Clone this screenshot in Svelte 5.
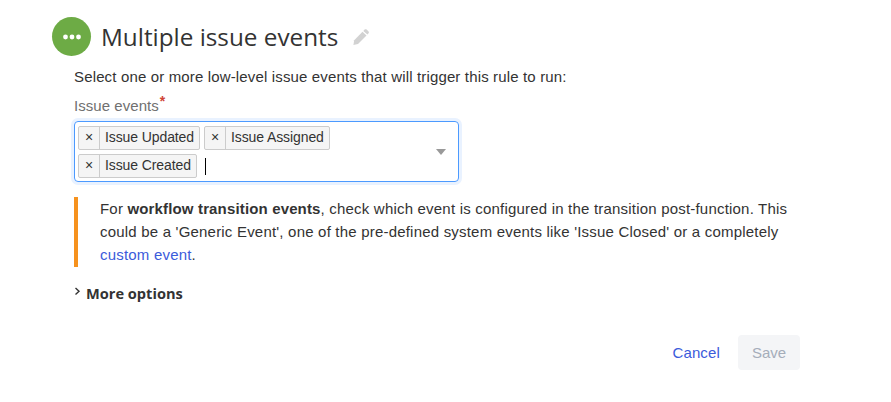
<script>
	const tags = ['Issue Updated', 'Issue Assigned', 'Issue Created'];
</script>

<div class="page">
	<header class="head">
		<span class="badge">
			<svg width="20" height="6" viewBox="0 0 20 6"><circle cx="3.5" cy="3" r="2.4" /><circle cx="10" cy="3" r="2.4" /><circle cx="16.5" cy="3" r="2.4" /></svg>
		</span>
		<h1>Multiple issue events</h1>
		<svg class="pencil" width="18" height="18" viewBox="0 0 18 18">
			<path d="M12.6 1.6 C13.2 1 14 1 14.6 1.5 L16.6 3.4 C17.1 4 17.1 4.7 16.6 5.3 L15.4 6.6 L11.3 2.9 Z" />
			<path d="M10.5 3.8 L14.5 7.5 L6 16 L1.4 17 L2.2 12.2 Z" />
		</svg>
	</header>

	<div class="form">
		<p class="intro">Select one or more low-level issue events that will trigger this rule to run:</p>
		<div class="label">Issue events<span class="req">*</span></div>

		<div class="select">
			<div class="tags">
				{#each tags as tag}
					<span class="tag"><span class="x">×</span><span class="name">{tag}</span></span>
				{/each}
				<span class="caret"></span>
			</div>
			<span class="arrow"></span>
		</div>

		<div class="note">
			For <b>workflow transition events</b>, check which event is configured in the transition post-function. This could be a 'Generic Event', one of the pre-defined system events like 'Issue Closed' or a completely <a href="#custom">custom event</a>.
		</div>

		<div class="more">
			<svg width="7" height="9" viewBox="0 0 7 9"><path d="M1.5 1 L5 4.2 L1.5 7.4" /></svg>
			<span>More options</span>
		</div>

		<div class="actions">
			<a class="cancel" href="#cancel">Cancel</a>
			<button class="save" disabled>Save</button>
		</div>
	</div>
</div>

<style>
	:global(body) {
		background: #fff;
		font-family: 'Liberation Sans', Arial, sans-serif;
		font-size: 15px;
		letter-spacing: 0.15px;
		color: #333;
	}

	.page {
		width: 891px;
		height: 402px;
		box-sizing: border-box;
		padding: 17px 0 0 52px;
		overflow: hidden;
	}

	.head {
		display: flex;
		align-items: center;
		height: 39px;
	}

	.badge {
		width: 39px;
		height: 39px;
		border-radius: 50%;
		background: #6dab45;
		display: flex;
		align-items: center;
		justify-content: center;
		flex: none;
	}

	.badge circle {
		fill: #fff;
	}

	h1 {
		margin: 0 0 0 10px;
		font-family: 'Open Sans', sans-serif;
		font-size: 24.3px;
		font-weight: 400;
		letter-spacing: 0;
		color: #333;
		line-height: 39px;
	}

	.pencil {
		margin-left: 14px;
		fill: #d2d2d2;
	}

	.form {
		margin-left: 22px;
		width: 726px;
	}

	.intro {
		margin: 0;
		padding-top: 12px;
		line-height: 18px;
	}

	.label {
		margin-top: 10px;
		color: #707070;
		line-height: 20px;
		letter-spacing: 0.05px;
	}

	.req {
		color: #d04437;
		font-size: 14px;
		font-weight: 700;
		position: relative;
		top: -5px;
		left: 1px;
	}

	.select {
		margin-top: 5px;
		width: 385px;
		height: 61px;
		box-sizing: border-box;
		border: 1px solid #4c9aff;
		border-radius: 4px;
		box-shadow: 0 0 0 3px #e9f2ff;
		display: flex;
		padding: 4px 0 0 3px;
		position: relative;
	}

	.tags {
		display: flex;
		flex-wrap: wrap;
		align-items: center;
		align-content: flex-start;
		gap: 4px;
		width: 340px;
	}

	.tag {
		display: inline-flex;
		height: 24px;
		box-sizing: border-box;
		border: 1px solid #ccc;
		border-radius: 2px;
		background: #f5f5f5;
		font-size: 14px;
		letter-spacing: -0.1px;
		line-height: 20px;
		color: #333;
	}

	.x {
		width: 20px;
		text-align: center;
		border-right: 1px solid #ccc;
		font-size: 14px;
	}

	.name {
		padding: 0 5px;
	}

	.caret {
		width: 1px;
		height: 17px;
		background: #000;
		margin-left: 4px;
	}

	.arrow {
		position: absolute;
		right: 12px;
		top: 27px;
		border-left: 5px solid transparent;
		border-right: 5px solid transparent;
		border-top: 6px solid #999;
	}

	.note {
		margin-top: 15px;
		border-left: 4px solid #f6921e;
		padding-left: 22px;
		line-height: 23px;
		letter-spacing: 0.2px;
		width: 694px;
		height: 70px;
	}

	.note b {
		font-weight: 700;
		letter-spacing: 0.15px;
	}

	a {
		color: #3b5bdb;
		text-decoration: none;
	}

	.more {
		margin-top: 16px;
		display: flex;
		align-items: center;
		gap: 5px;
		font-family: 'Open Sans', sans-serif;
		font-weight: 700;
		font-size: 14.6px;
		letter-spacing: 0;
		line-height: 20px;
		color: #333;
	}

	.more svg {
		fill: none;
		stroke: #333;
		stroke-width: 1.4;
		position: relative;
		top: -2px;
	}

	.actions {
		margin-top: 32px;
		display: flex;
		justify-content: flex-end;
		align-items: center;
		gap: 18px;
	}

	.cancel {
		color: #3b5bdb;
	}

	.save {
		width: 62px;
		height: 35px;
		border: none;
		border-radius: 4px;
		background: #f4f5f7;
		color: #a5adba;
		font-family: inherit;
		font-size: 15px;
	}
</style>
